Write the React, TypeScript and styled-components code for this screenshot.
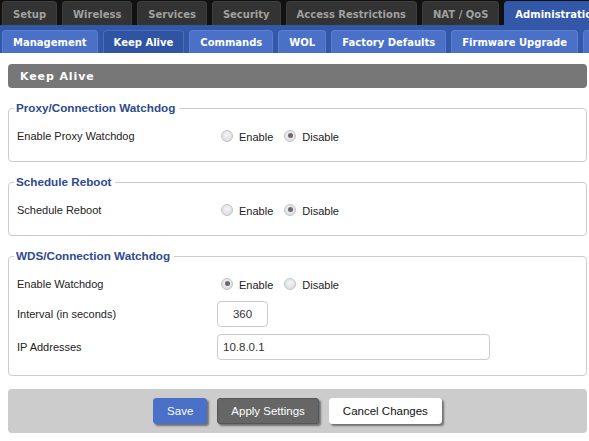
import React from 'react'
import styled, { createGlobalStyle } from 'styled-components'

const GlobalStyle = createGlobalStyle`
  body {
    margin: 0;
    background: #fff;
    font-family: 'Liberation Sans', Arial, sans-serif;
    font-size: 11px;
    color: #222;
  }
`
const MainNav = styled.div`
  display: flex;
  gap: 5px;
  height: 24px;
  padding: 1px 0 0 2px;
  background: #111;
  overflow: hidden;
  white-space: nowrap;
`
const MainTab = styled.div<{ $active?: boolean }>`
  display: flex;
  align-items: center;
  flex: none;
  padding: 1px 10px 0;
  border-radius: 4px 4px 0 0;
  background: ${({ $active }) => ($active ? '#3358a8' : '#333')};
  border: 1px solid ${({ $active }) => ($active ? '#3358a8' : '#3e3e3e')};
  border-bottom: 0;
  color: ${({ $active }) => ($active ? '#fff' : '#a0a0a0')};
  font-family: 'DejaVu Sans', Verdana, sans-serif;
  font-weight: bold;
  font-size: 10px;
`
const SubNav = styled.div`
  display: flex;
  gap: 5px;
  height: 23px;
  padding: 5px 0 0 2px;
  background: #3358a8;
  overflow: hidden;
  white-space: nowrap;
`
const SubTab = styled.div<{ $active?: boolean }>`
  display: flex;
  align-items: center;
  flex: none;
  padding: 0 10px;
  border-radius: 4px 4px 0 0;
  background: ${({ $active }) => ($active ? '#2e54a3' : '#4a70c8')};
  border: 1px solid ${({ $active }) => ($active ? '#4a6cbd' : '#5a7ed0')};
  border-bottom: 0;
  color: #fff;
  font-family: 'DejaVu Sans', Verdana, sans-serif;
  font-weight: bold;
  font-size: 10px;
`
const Content = styled.div`
  padding: 11px 2px 0 8px;
`
const Heading = styled.h2`
  margin: 0 0 13px;
  height: 24px;
  line-height: 25px;
  padding-left: 12px;
  border-radius: 4px;
  background: #777;
  color: #fff;
  font-family: 'DejaVu Sans', Verdana, sans-serif;
  font-size: 11px;
  font-weight: bold;
  letter-spacing: 0.9px;
`
const Fieldset = styled.fieldset`
  margin: 0 0 13px;
  padding: 11px 8px 15px;
  border: 1px solid #ccc;
  border-radius: 4px;
`
const Legend = styled.legend`
  margin-left: -3px;
  padding: 0 4px 0 2px;
  line-height: 14px;
  color: #2e4a8e;
  font-weight: bold;
  font-size: 11.7px;
`
const Row = styled.div`
  display: grid;
  grid-template-columns: 200px 1fr;
  align-items: center;
  min-height: 20px;
  & + & {
    margin-top: 7px;
  }
`
const Label = styled.span`
  font-size: 11px;
`
const Radios = styled.div`
  display: flex;
  align-items: center;
  gap: 7px;
`
const RadioLabel = styled.label`
  display: flex;
  align-items: center;
  gap: 6px;
  padding-top: 2px;
`
const Radio = styled.input.attrs({ type: 'radio' })`
  appearance: none;
  margin: -3px 0 0 4px;
  width: 12px;
  height: 12px;
  border-radius: 50%;
  border: 1px solid #c4c4c4;
  background: radial-gradient(circle at 50% 40%, #f6f6f6, #d6d6d6);
  display: grid;
  place-items: center;
  &:checked::after {
    content: '';
    width: 5px;
    height: 5px;
    border-radius: 50%;
    background: #6a6a6a;
  }
`
const TextInput = styled.input<{ $w: number }>`
  box-sizing: border-box;
  width: ${({ $w }) => $w}px;
  height: 26px;
  padding: 0 5px;
  border: 1px solid #ccc;
  border-radius: 4px;
  font-family: inherit;
  font-size: 11.5px;
  color: #333;
  text-align: ${({ $w }) => ($w < 100 ? 'center' : 'left')};
`
const Footer = styled.div`
  display: flex;
  justify-content: center;
  gap: 10px;
  margin-top: 0;
  padding: 9px 0;
  border-radius: 4px;
  background: #ccc;
`
const Button = styled.button<{ $kind: 'primary' | 'dark' | 'light' }>`
  height: 26px;
  padding: 0 13px;
  border: 1px solid
    ${({ $kind }) => ($kind === 'primary' ? '#4a70c8' : $kind === 'dark' ? '#555' : '#fff')};
  border-radius: 3px;
  background: ${({ $kind }) => ($kind === 'primary' ? '#4a70c8' : $kind === 'dark' ? '#666' : '#fff')};
  color: ${({ $kind }) => ($kind === 'light' ? '#111' : '#fff')};
  font-family: inherit;
  font-size: 11.5px;
  box-shadow: 2px 2px 2px rgba(0, 0, 0, 0.45);
`

const mainTabs = ['Setup', 'Wireless', 'Services', 'Security', 'Access Restrictions', 'NAT / QoS', 'Administration']
const subTabs = ['Management', 'Keep Alive', 'Commands', 'WOL', 'Factory Defaults', 'Firmware Upgrade', 'Backup']

const Toggle = ({ name, on }: { name: string; on: boolean }) => (
  <Radios>
    <RadioLabel>
      <Radio name={name} defaultChecked={on} />
      Enable
    </RadioLabel>
    <RadioLabel>
      <Radio name={name} defaultChecked={!on} />
      Disable
    </RadioLabel>
  </Radios>
)

const App = () => {
  return (
    <>
      <GlobalStyle />
      <MainNav>
        {mainTabs.map((t) => (
          <MainTab key={t} $active={t === 'Administration'}>
            {t}
          </MainTab>
        ))}
      </MainNav>
      <SubNav>
        {subTabs.map((t) => (
          <SubTab key={t} $active={t === 'Keep Alive'}>
            {t}
          </SubTab>
        ))}
      </SubNav>
      <Content>
        <Heading>Keep Alive</Heading>
        <Fieldset>
          <Legend>Proxy/Connection Watchdog</Legend>
          <Row>
            <Label>Enable Proxy Watchdog</Label>
            <Toggle name="proxy" on={false} />
          </Row>
        </Fieldset>
        <Fieldset>
          <Legend>Schedule Reboot</Legend>
          <Row>
            <Label>Schedule Reboot</Label>
            <Toggle name="reboot" on={false} />
          </Row>
        </Fieldset>
        <Fieldset>
          <Legend>WDS/Connection Watchdog</Legend>
          <Row>
            <Label>Enable Watchdog</Label>
            <Toggle name="wds" on />
          </Row>
          <Row>
            <Label>Interval (in seconds)</Label>
            <TextInput $w={51} defaultValue="360" />
          </Row>
          <Row>
            <Label>IP Addresses</Label>
            <TextInput $w={273} defaultValue="10.8.0.1" />
          </Row>
        </Fieldset>
        <Footer>
          <Button $kind="primary">Save</Button>
          <Button $kind="dark">Apply Settings</Button>
          <Button $kind="light">Cancel Changes</Button>
        </Footer>
      </Content>
    </>
  )
}

export default App
